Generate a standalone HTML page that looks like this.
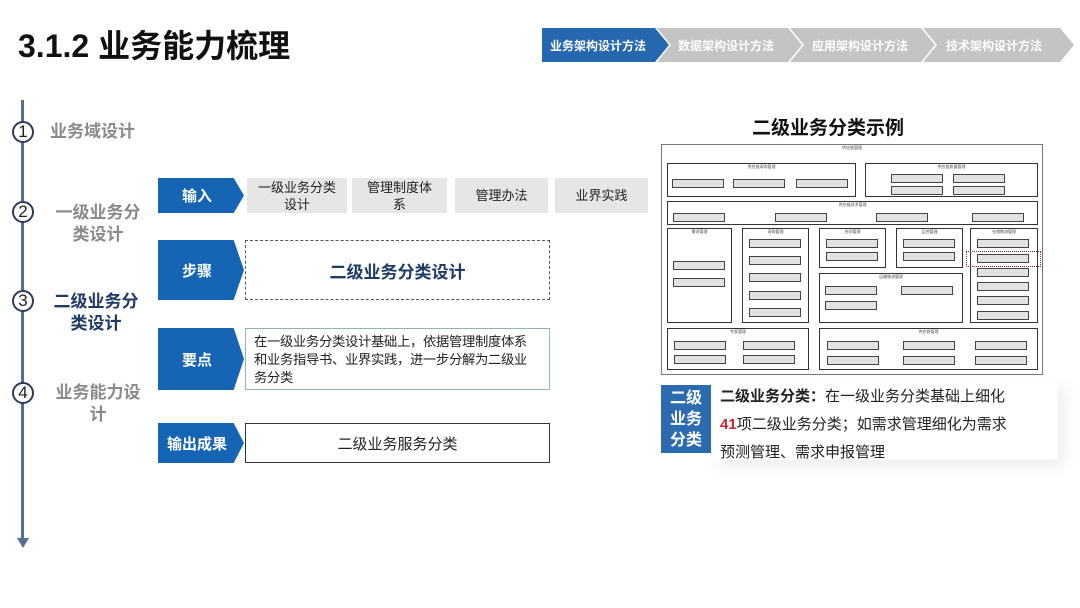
<!DOCTYPE html><html><head><meta charset="utf-8"><style>
*{margin:0;padding:0;box-sizing:border-box}
body{width:1080px;height:608px;background:#fff;position:relative;overflow:hidden;font-family:"Liberation Sans","Noto Sans CJK SC",sans-serif}
.a{position:absolute}
.tag{position:absolute;left:158px;width:86px;background:#1565b4;color:#fff;font-weight:bold;font-size:15px;display:flex;align-items:center;justify-content:center;padding-right:8px;clip-path:polygon(0 0,88% 0,100% 50%,88% 100%,0 100%)}
.in{position:absolute;top:178px;height:35px;background:#e6e6e6;font-size:13px;color:#222;display:flex;align-items:center;justify-content:center;text-align:center;line-height:17px}
.c{position:absolute;left:12px;width:22px;height:22px;border:2px solid #2b3d52;border-radius:50%;background:#fff;font-size:17px;display:flex;align-items:center;justify-content:center;color:#222}
.lb{position:absolute;font-weight:bold;font-size:17px;color:#8a8a8a;text-align:center;line-height:22px}
.b{position:absolute;border:1px solid #333;background:#fff;font-size:4px;text-align:center;color:#444}
.s{position:absolute;height:9px;width:52px;border:1px solid #444;background:#e2e2e2}
</style></head><body>
<div class="a" style="left:18px;top:21px;font-size:32px;font-weight:bold;color:#111">3.1.2 业务能力梳理</div>
<svg class="a" style="left:542px;top:28px" width="534" height="34">
<polygon points="0,0 113,0 127,17 113,34 0,34" fill="#2468b0"/>
<polygon points="115,0 246,0 260,17 246,34 115,34 129,17" fill="#c4c4c4"/>
<polygon points="248,0 379,0 393,17 379,34 248,34 262,17" fill="#c4c4c4"/>
<polygon points="381,0 518,0 532,17 518,34 381,34 395,17" fill="#c4c4c4"/>
<g font-size="12" font-weight="bold" fill="#fff" font-family="Liberation Sans,Noto Sans CJK SC,sans-serif"><text x="8" y="22">业务架构设计方法</text><text x="136" y="22">数据架构设计方法</text><text x="270" y="22">应用架构设计方法</text><text x="404" y="22">技术架构设计方法</text></g>
</svg>
<div class="a" style="left:21px;top:100px;width:3px;height:442px;background:#55708e"></div>
<svg class="a" style="left:16px;top:538px" width="14" height="12"><polygon points="1,0 13,0 7,10" fill="#55708e"/></svg>
<div class="c" style="top:121px">1</div><div class="c" style="top:201px">2</div><div class="c" style="top:290px">3</div><div class="c" style="top:382px">4</div>
<div class="lb" style="left:50px;top:121px">业务域设计</div>
<div class="lb" style="left:50px;top:202px;width:96px">一级业务分<br>类设计</div>
<div class="lb" style="left:48px;top:291px;width:96px;color:#1f3b63">二级业务分<br>类设计</div>
<div class="lb" style="left:50px;top:382px;width:96px">业务能力设<br>计</div>
<div class="tag" style="top:178px;height:35px">输入</div>
<div class="tag" style="top:240px;height:60px">步骤</div>
<div class="tag" style="top:328px;height:62px">要点</div>
<div class="tag" style="top:423px;height:40px">输出成果</div>
<div class="in" style="left:247px;width:100px">一级业务分类<br>设计</div>
<div class="in" style="left:352px;width:95px">管理制度体<br>系</div>
<div class="in" style="left:455px;width:93px">管理办法</div>
<div class="in" style="left:555px;width:93px">业界实践</div>
<div class="a" style="left:245px;top:240px;width:305px;height:60px;border:1px dashed #555;display:flex;align-items:center;justify-content:center;font-size:17px;font-weight:bold;color:#1f3b63">二级业务分类设计</div>
<div class="a" style="left:245px;top:328px;width:305px;height:62px;border:1px solid #8fb3b8;padding:4px 6px 4px 8px;font-size:13.3px;line-height:18px;color:#222;letter-spacing:-0.3px">在一级业务分类设计基础上，依据管理制度体系<br>和业务指导书、业界实践，进一步分解为二级业<br>务分类</div>
<div class="a" style="left:245px;top:423px;width:305px;height:40px;border:1px solid #333;display:flex;align-items:center;justify-content:center;font-size:15px;color:#222">二级业务服务分类</div>
<div class="a" style="left:752px;top:113px;font-size:19px;font-weight:bold;color:#111">二级业务分类示例</div>
<div class="b" style="left:661px;top:144px;width:382px;height:231px;border-color:#777">供应链管理</div>
<div class="b" style="left:667px;top:163px;width:189px;height:34px">供应链采购管理</div>
<div class="b" style="left:865px;top:163px;width:173px;height:34px">供应链质量管理</div>
<div class="b" style="left:667px;top:201px;width:371px;height:24px">供应链技术管理</div>
<div class="b" style="left:667px;top:228px;width:65px;height:95px">需求管理</div>
<div class="b" style="left:742px;top:228px;width:67px;height:95px">采购管理</div>
<div class="b" style="left:819px;top:228px;width:67px;height:40px">合同管理</div>
<div class="b" style="left:896px;top:228px;width:67px;height:40px">品控管理</div>
<div class="b" style="left:970px;top:228px;width:68px;height:95px">仓储物流管理</div>
<div class="b" style="left:819px;top:273px;width:144px;height:50px">运输物流管理</div>
<div class="b" style="left:667px;top:328px;width:142px;height:42px">专家管理</div>
<div class="b" style="left:819px;top:328px;width:219px;height:42px">供应商管理</div>
<div class="s" style="left:672px;top:179px"></div><div class="s" style="left:733px;top:179px"></div><div class="s" style="left:796px;top:179px"></div>
<div class="s" style="left:891px;top:174px"></div><div class="s" style="left:953px;top:174px"></div><div class="s" style="left:891px;top:186px"></div><div class="s" style="left:953px;top:186px"></div>
<div class="s" style="left:673px;top:213px"></div><div class="s" style="left:775px;top:213px"></div><div class="s" style="left:876px;top:213px"></div><div class="s" style="left:972px;top:213px"></div>
<div class="s" style="left:673px;top:261px"></div><div class="s" style="left:673px;top:278px"></div>
<div class="s" style="left:749px;top:239px"></div><div class="s" style="left:749px;top:256px"></div><div class="s" style="left:749px;top:273px"></div><div class="s" style="left:749px;top:291px"></div><div class="s" style="left:749px;top:308px"></div>
<div class="s" style="left:826px;top:239px"></div><div class="s" style="left:826px;top:252px"></div><div class="s" style="left:903px;top:239px"></div><div class="s" style="left:903px;top:252px"></div>
<div class="s" style="left:825px;top:286px"></div><div class="s" style="left:901px;top:286px"></div><div class="s" style="left:825px;top:301px"></div>
<div class="s" style="left:977px;top:239px"></div><div class="s" style="left:977px;top:254px"></div><div class="s" style="left:977px;top:268px"></div><div class="s" style="left:977px;top:282px"></div><div class="s" style="left:977px;top:296px"></div><div class="s" style="left:977px;top:311px"></div>
<div class="a" style="left:966px;top:251px;width:75px;height:16px;border:1px dotted #a02030"></div>
<div class="s" style="left:674px;top:341px"></div><div class="s" style="left:743px;top:341px"></div><div class="s" style="left:674px;top:355px"></div><div class="s" style="left:743px;top:355px"></div>
<div class="s" style="left:827px;top:341px"></div><div class="s" style="left:903px;top:341px"></div><div class="s" style="left:975px;top:341px"></div><div class="s" style="left:827px;top:356px"></div><div class="s" style="left:903px;top:356px"></div><div class="s" style="left:975px;top:356px"></div>
<div class="a" style="left:661px;top:385px;width:50px;height:68px;background:#2c6bb0;color:#fff;font-weight:bold;font-size:16px;line-height:21px;text-align:center;padding-top:3px">二级<br>业务<br>分类</div>
<div class="a" style="left:713px;top:382px;width:345px;height:78px;box-shadow:6px 6px 16px rgba(0,0,0,0.08)"></div>
<div class="a" style="left:720px;top:383px;font-size:15px;line-height:28px;color:#222;width:320px"><b>二级业务分类：</b>在一级业务分类基础上细化<br><b style="color:#c0272d">41</b>项二级业务分类；如需求管理细化为需求<br>预测管理、需求申报管理</div>
</body></html>
